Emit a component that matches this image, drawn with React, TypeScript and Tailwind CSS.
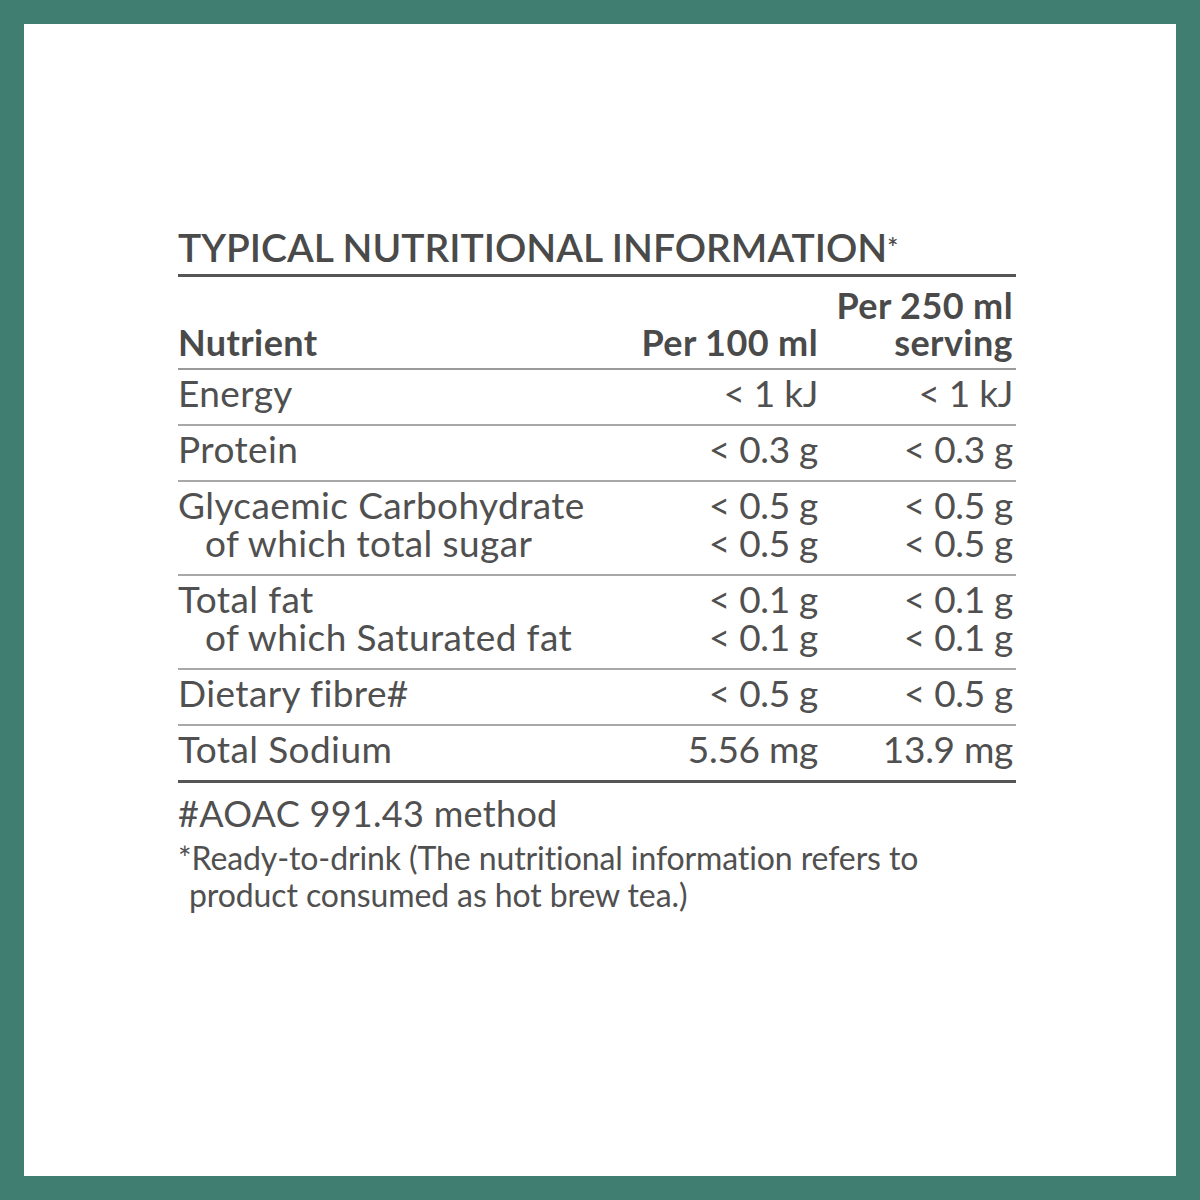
import React from "react";

const font = { fontFamily: "Lato, 'Open Sans', sans-serif" };

type Row = { label: string[]; a: string[]; b: string[] };

const rows: Row[] = [
  { label: ["Energy"], a: ["< 1 kJ"], b: ["< 1 kJ"] },
  { label: ["Protein"], a: ["< 0.3 g"], b: ["< 0.3 g"] },
  {
    label: ["Glycaemic Carbohydrate", "of which total sugar"],
    a: ["< 0.5 g", "< 0.5 g"],
    b: ["< 0.5 g", "< 0.5 g"],
  },
  {
    label: ["Total fat", "of which Saturated fat"],
    a: ["< 0.1 g", "< 0.1 g"],
    b: ["< 0.1 g", "< 0.1 g"],
  },
  { label: ["Dietary fibre#"], a: ["< 0.5 g"], b: ["< 0.5 g"] },
  { label: ["Total Sodium"], a: ["5.56 mg"], b: ["13.9 mg"] },
];

export default function App() {
  return (
    <div className="w-[1200px] h-[1200px] bg-[#417e72] p-[24px]" style={font}>
      <div className="w-full h-full bg-white pl-[154px] pt-[200px] text-[#505050]">
        <div className="w-[838px]">
          <div className="text-[39px] leading-[46px] font-semibold text-[#4a4a4a] tracking-[0px] pb-[4px] border-b-[3px] border-[#555]">
            TYPICAL NUTRITIONAL INFORMATION<span className="text-[26px] align-top">*</span>
          </div>
          <div className="grid grid-cols-[1fr_200px_196px] border-b-2 border-[#9a9a9a] text-[36px] leading-[37px] font-bold text-[#4a4a4a] tracking-[0.4px] pt-[10px] pb-[7px]">
            <div className="self-end">Nutrient</div>
            <div className="self-end text-right pr-[2px]">Per 100 ml</div>
            <div className="text-right pr-[3px]">
              <div>Per 250 ml</div>
              <div>serving</div>
            </div>
          </div>
          {rows.map((r, i) => (
            <div
              key={i}
              className={
                "grid grid-cols-[1fr_200px_196px] text-[37px] leading-[38px] pt-[4px] pb-[12px] " +
                (i === rows.length - 1
                  ? "border-b-[3px] border-[#555]"
                  : "border-b-2 border-[#a8a8a8]")
              }
            >
              <div className="tracking-[0.4px]">
                {r.label.map((l, j) => (
                  <div key={j} className={j > 0 ? "pl-[27px]" : ""}>
                    {l}
                  </div>
                ))}
              </div>
              <div className="text-right pr-[2px] tracking-[-0.3px]">
                {r.a.map((v, j) => (
                  <div key={j}>{v}</div>
                ))}
              </div>
              <div className="text-right pr-[3px] tracking-[-0.3px]">
                {r.b.map((v, j) => (
                  <div key={j}>{v}</div>
                ))}
              </div>
            </div>
          ))}
          <div className="text-[36px] leading-[40px] tracking-[0.3px] pt-[10px]">#AOAC 991.43 method</div>
          <div className="text-[32px] leading-[37px] tracking-[-0.1px] pt-[6px]">
            <div>*Ready-to-drink (The nutritional information refers to</div>
            <div className="pl-[11px]">product consumed as hot brew tea.)</div>
          </div>
        </div>
      </div>
    </div>
  );
}
